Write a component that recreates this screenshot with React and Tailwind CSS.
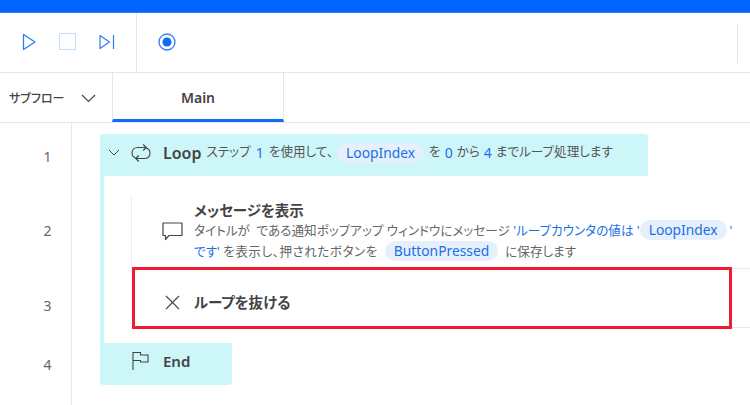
import React from "react";

function Chip({ children, className = "" }) {
  return (
    <span className={`inline-block h-[20px] leading-[19px] rounded-full bg-[#e6f0fd] text-[#1a6fe8] px-[9px] text-[13.8px] ${className}`}>
      {children}
    </span>
  );
}
const B = ({ children }) => <span className="text-[#1a6fe8]">{children}</span>;

function Num({ className = "", children }) {
  return (
    <div className={`w-[71px] pl-[24px] flex items-center justify-center text-[14px] text-[#666666] ${className}`}>
      {children}
    </div>
  );
}

export default function App() {
  return (
    <div className="w-[750px] h-[405px] overflow-hidden bg-white flex flex-col font-['Noto_Sans','Noto_Sans_CJK_JP',sans-serif] text-[#444444] [font-feature-settings:'palt']">
      {/* Title bar */}
      <div className="h-[13px] shrink-0 bg-[#0066ff] border-b border-[#2f80f5]" />

      {/* Toolbar */}
      <div className="h-[60px] shrink-0 flex items-center border-b-[1.5px] border-[#e6e6e6]">
        <div className="w-[137px] h-full flex items-center border-r border-[#e6e6e6] pl-[22px] pb-[2px]">
          <svg width="15" height="20" viewBox="0 0 15 20" fill="none" stroke="#2b7cf6" strokeWidth="1.3">
            <path d="M1.5 2.5 L13 10 L1.5 17.5 Z" strokeLinejoin="round" />
          </svg>
          <div className="w-[17px] h-[17px] border-[1.5px] border-[#c4dcfc] ml-[22px]" />
          <svg className="ml-[23px]" width="16" height="16" viewBox="0 0 16 16" fill="none" stroke="#2b7cf6" strokeWidth="1.2">
            <path d="M1 1.5 L10.5 8 L1 14.5 Z" strokeLinejoin="round" />
            <path d="M14.5 1 V15" />
          </svg>
        </div>
        <div className="ml-[21px] pb-[2px]">
          <svg width="18" height="18" viewBox="0 0 18 18">
            <circle cx="9" cy="9" r="8" fill="none" stroke="#2b7cf6" strokeWidth="1.3" />
            <circle cx="9" cy="9" r="4.5" fill="#0f6cf5" />
          </svg>
        </div>
        <div className="ml-auto mr-[12px] w-px h-[40px] bg-[#e4e4e4]" />
      </div>

      {/* Tabs */}
      <div className="h-[50px] shrink-0 flex border-b-[1.5px] border-[#e6e6e6]">
        <div className="w-[112px] flex items-center pl-[9px] text-[12px] font-medium text-[#444444] pt-[2px]">
          <span>サブフロー</span>
          <svg className="ml-[17px]" width="15" height="9" viewBox="0 0 15 9" fill="none" stroke="#444444" strokeWidth="1.1">
            <path d="M1 1 L7.5 7.5 L14 1" />
          </svg>
        </div>
        <div className="w-[172px] flex items-center justify-center border-x border-[#e6e6e6] border-b-[3px] border-b-[#0f6cf5] text-[14px] font-semibold text-[#444444] pt-[3px]">
          Main
        </div>
      </div>

      {/* Body */}
      <div className="flex-1 flex min-h-0 -mt-px">
        {/* Line numbers */}
        <div className="w-[72px] shrink-0 border-r-[1.5px] border-[#e8e8e8] flex flex-col pt-[12px]">
          <Num className="h-[42px] pt-[2px]">1</Num>
          <Num className="h-[108px]">2</Num>
          <Num className="h-[42px]">3</Num>
          <Num className="h-[76px]">4</Num>
        </div>

        {/* Flow */}
        <div className="flex-1 flex flex-col pt-[12px] pl-[28px]">
          {/* Loop */}
          <div className="w-[548px] h-[42px] shrink-0 bg-[#cdf6f9] rounded-t-[3px] flex items-center pl-[8px] pb-[5px] text-[12.6px] text-[#555555] whitespace-nowrap">
            <svg width="12" height="8" viewBox="0 0 12 8" fill="none" stroke="#444444" strokeWidth="1">
              <path d="M1 1 L6 6 L11 1" />
            </svg>
            <svg className="ml-[11px]" width="20" height="20" viewBox="0 0 20 20" fill="none" stroke="#444444" strokeWidth="1.1">
              <path d="M5.5 15.5 C2.5 14.5 1 12.5 1 10 C1 6.5 3.5 4.5 7 4.5 H15" />
              <path d="M12.2 1.5 L15.3 4.5 L12.2 7.5" />
              <path d="M14.5 4.8 C17.5 5.5 19 7.5 19 10 C19 13.5 16.5 15.5 13 15.5 H5" />
              <path d="M7.8 12.5 L4.7 15.5 L7.8 18.5" />
            </svg>
            <span className="ml-[12px] text-[16px] font-semibold text-[#444444]">Loop</span>
            <span className="ml-[5px]">ステップ</span>
            <span className="ml-[5px] text-[14px]"><B>1</B></span>
            <span className="ml-[5px]">を使用して、</span>
            <Chip className="ml-[4px]">LoopIndex</Chip>
            <span className="ml-[5px]">を</span>
            <span className="mx-[4px] text-[14px]"><B>0</B></span>
            <span>から</span>
            <span className="mx-[4px] text-[14px]"><B>4</B></span>
            <span>までループ処理します</span>
          </div>

          {/* Loop body */}
          <div className="h-[167px] shrink-0 border-l-[4px] border-[#cdf6f9] flex flex-col pt-[19px]">
            {/* Message row */}
            <div className="h-[73px] shrink-0 ml-[27px] border-l-[1.5px] border-[#eeeeee] flex items-center pl-[30px]">
              <svg className="shrink-0" width="21" height="19" viewBox="0 0 21 19" fill="none" stroke="#444444" strokeWidth="1.2">
                <path d="M1 1 H20 V13.5 H7 L3.5 17.5 V13.5 H1 Z" strokeLinejoin="round" />
              </svg>
              <div className="ml-[11px] whitespace-nowrap -mt-px">
                <div className="text-[14.5px] leading-[20px] font-semibold text-[#444444]">メッセージを表示</div>
                <div className="text-[12.6px] leading-[20px] text-[#666666]">
                  タイトルが&nbsp;&nbsp;である通知ポップアップ ウィンドウにメッセージ <B>'ループカウンタの値は '</B>
                  <Chip className="mr-[3px]">LoopIndex</Chip>
                  <B>'</B>
                </div>
                <div className="text-[12.6px] leading-[20px] text-[#666666]">
                  <B>です'</B> <span className="tracking-[0.5px]">を表示し、押されたボタンを</span>
                  <Chip className="ml-[7px] mr-[7px]">ButtonPressed</Chip>に保存します
                </div>
              </div>
            </div>

            {/* Exit row, highlighted */}
            <div className="h-[62px] shrink-0 -mt-px flex">
              <div className="w-[600px] shrink-0 ml-[28px] border-[3px] border-[#ee1c2e] flex items-center pl-[30px] pt-[9px]">
                <svg className="-mt-[1px]" width="15" height="15" viewBox="0 0 15 15" fill="none" stroke="#444444" strokeWidth="1.1">
                  <path d="M1 1 L14 14 M14 1 L1 14" />
                </svg>
                <span className="ml-[14px] text-[14.5px] font-semibold text-[#444444]">ループを抜ける</span>
              </div>
              <div className="flex-1 my-[1px] border-y-[1.5px] border-[#e8e8e8]" />
            </div>
          </div>

          {/* End */}
          <div className="w-[132px] h-[42px] shrink-0 bg-[#cdf6f9] rounded-b-[4px] flex items-start pl-[32px] pt-[8px]">
            <svg width="17" height="20" viewBox="0 0 17 20" fill="none" stroke="#444444" strokeWidth="1.1">
              <path d="M1 1 V19" />
              <path d="M1 1.5 H8.5 V4 H16 V11 H8.5 V9.5 H1" strokeLinejoin="miter" />
            </svg>
            <span className="ml-[14px] -mt-[1px] text-[15px] font-semibold text-[#444444]">End</span>
          </div>
        </div>
      </div>
    </div>
  );
}
